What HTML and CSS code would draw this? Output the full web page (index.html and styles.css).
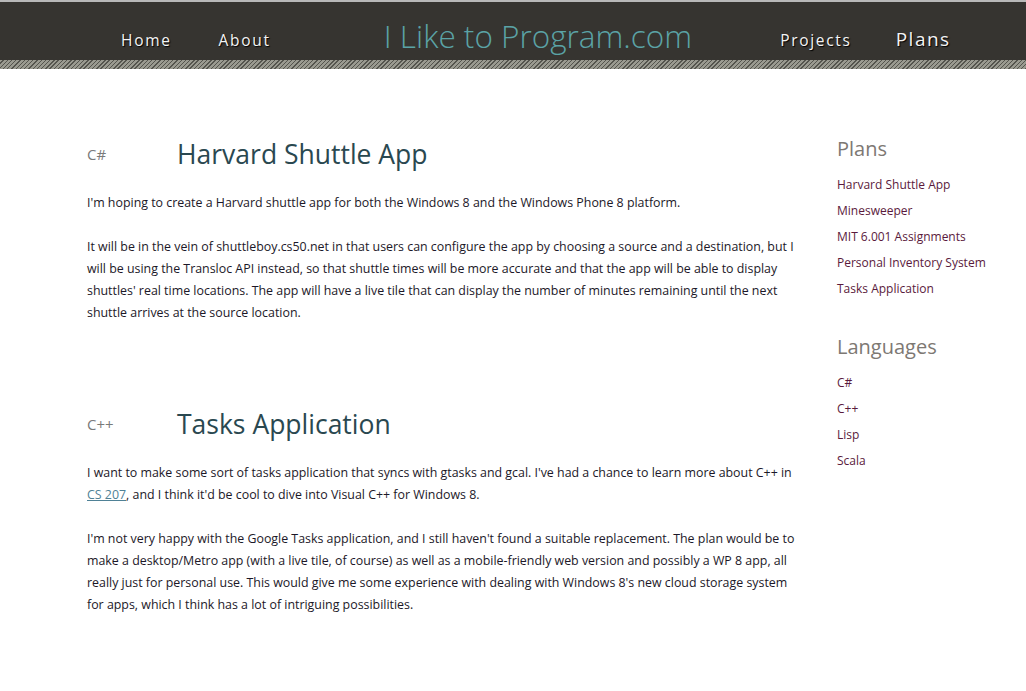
FILE: index.html
```html
<!DOCTYPE html>
<html>
<head>
<meta charset="utf-8">
<title>I Like to Program.com - Plans</title>
<link rel="stylesheet" href="styles.css">
</head>
<body>
<header class="site-header">
  <nav class="nav">
    <a class="nav-link nav-home" href="#">Home</a>
    <a class="nav-link nav-about" href="#">About</a>
    <a class="site-title" href="#">I Like to Program.com</a>
    <a class="nav-link nav-projects" href="#">Projects</a>
    <a class="nav-link nav-plans" href="#">Plans</a>
  </nav>
  <div class="stripe"></div>
</header>
<div class="page">
  <main class="content">
    <section class="plan">
      <div class="plan-head">
        <span class="lang">C#</span>
        <h1 class="plan-title">Harvard Shuttle App</h1>
      </div>
      <p>I'm hoping to create a Harvard shuttle app for both the Windows 8 and the Windows Phone 8 platform.</p>
      <p>It will be in the vein of shuttleboy.cs50.net in that users can configure the app by choosing a source and a destination, but I will be using the Transloc API instead, so that shuttle times will be more accurate and that the app will be able to display shuttles' real time locations. The app will have a live tile that can display the number of minutes remaining until the next shuttle arrives at the source location.</p>
    </section>
    <section class="plan">
      <div class="plan-head">
        <span class="lang">C++</span>
        <h1 class="plan-title">Tasks Application</h1>
      </div>
      <p>I want to make some sort of tasks application that syncs with gtasks and gcal. I've had a chance to learn more about C++ in <a class="inline-link" href="#">CS 207</a>, and I think it'd be cool to dive into Visual C++ for Windows 8.</p>
      <p>I'm not very happy with the Google Tasks application, and I still haven't found a suitable replacement. The plan would be to make a desktop/Metro app (with a live tile, of course) as well as a mobile-friendly web version and possibly a WP 8 app, all really just for personal use. This would give me some experience with dealing with Windows 8's new cloud storage system for apps, which I think has a lot of intriguing possibilities.</p>
    </section>
  </main>
  <aside class="sidebar">
    <h2 class="side-title">Plans</h2>
    <ul class="side-list">
      <li><a href="#">Harvard Shuttle App</a></li>
      <li><a href="#">Minesweeper</a></li>
      <li><a href="#">MIT 6.001 Assignments</a></li>
      <li><a href="#">Personal Inventory System</a></li>
      <li><a href="#">Tasks Application</a></li>
    </ul>
    <h2 class="side-title side-title-2">Languages</h2>
    <ul class="side-list">
      <li><a href="#">C#</a></li>
      <li><a href="#">C++</a></li>
      <li><a href="#">Lisp</a></li>
      <li><a href="#">Scala</a></li>
    </ul>
  </aside>
</div>
</body>
</html>
```
FILE: styles.css
```css
html, body {
  margin: 0;
  padding: 0;
  background: #fff;
}
body {
  font-family: "Segoe UI", "Open Sans", "Noto Sans", sans-serif;
  color: #1c1828;
}
a { text-decoration: none; }

.site-header {
  border-top: 2px solid #b8b8b8;
  background: #363430;
}
.nav {
  display: flex;
  align-items: center;
  height: 58px;
  padding-left: 121px;
}
.nav-link {
  color: #f4f4f4;
  font-size: 15.5px;
  letter-spacing: 1.7px;
  text-shadow: 1px 1px 1px #000;
  padding-top: 18px;
}
.nav-home { margin-right: 47px; }
.nav-about { margin-right: 113px; }
.nav-projects { margin-left: 88px; margin-right: 44px; }
.nav-plans { font-size: 19px; letter-spacing: 1.5px; padding-top: 16px; }
.site-title {
  color: #5ba3a6;
  font-size: 31.5px;
  font-weight: 300;
  line-height: 1;
  padding-top: 10px;
}
.stripe {
  height: 9px;
  background-color: #6f6f66;
  background-image: repeating-linear-gradient(135deg, #9a9a90 0 2px, #55554e 2px 3px);
}

.page {
  display: flex;
  padding-left: 87px;
}
.content {
  width: 710px;
  padding-top: 67px;
}
.plan { margin-bottom: 82px; }
.plan-head {
  display: flex;
  align-items: center;
  margin-bottom: 20px;
}
.lang {
  width: 90px;
  color: #7a7a7a;
  font-size: 15px;
}
.plan-title {
  margin: 0;
  font-size: 26.5px;
  font-weight: 400;
  color: #2a4850;
}
.content p {
  margin: 0 0 22px;
  font-size: 12.4px;
  line-height: 22px;
}
.inline-link {
  color: #4f8196;
  text-decoration: underline;
}

.sidebar {
  margin-left: 40px;
  padding-top: 66px;
}
.side-title {
  margin: 0 0 10px;
  font-size: 20px;
  font-weight: 400;
  color: #7d7873;
}
.side-title-2 { margin-top: 31px; }
.side-list {
  list-style: none;
  margin: 0;
  padding: 0;
}
.side-list li {
  font-size: 12px;
  line-height: 26px;
}
.side-list a { color: #5a1a3c; }
```
